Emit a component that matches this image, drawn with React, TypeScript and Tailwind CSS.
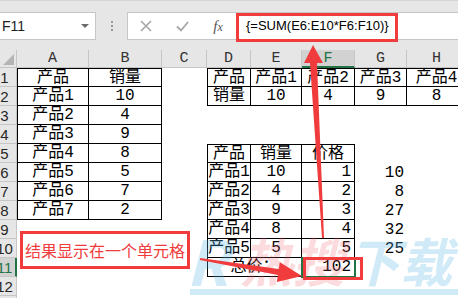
import clsx from 'clsx';

type Cell = {
  v?: string;
  r?: boolean; // right aligned (numbers)
  b?: boolean; // has black border
  span?: number;
  skip?: boolean; // covered by a merged cell
};

const cols = [
  { id: 'A', sel: false },
  { id: 'B', sel: false },
  { id: 'C', sel: false },
  { id: 'D', sel: false },
  { id: 'E', sel: false },
  { id: 'F', sel: true },
  { id: 'G', sel: false },
  { id: 'H', sel: false },
];

const t = (v: string): Cell => ({ v, b: true });
const n = (v: string): Cell => ({ v, r: true, b: true });
const g = (v: string): Cell => ({ v, r: true });
const e: Cell = {};

const rows: Cell[][] = [
  [t('产品'), t('销量'), e, t('产品'), t('产品1'), t('产品2'), t('产品3'), t('产品4')],
  [t('产品1'), t('10'), e, t('销量'), t('10'), t('4'), t('9'), t('8')],
  [t('产品2'), t('4'), e, e, e, e, e, e],
  [t('产品3'), t('9'), e, e, e, e, e, e],
  [t('产品4'), t('8'), e, t('产品'), t('销量'), t('价格'), e, e],
  [t('产品5'), t('5'), e, t('产品1'), t('10'), n('1'), g('10'), e],
  [t('产品6'), t('7'), e, t('产品2'), t('4'), n('2'), g('8'), e],
  [t('产品7'), t('2'), e, t('产品3'), t('9'), n('3'), g('27'), e],
  [e, e, e, t('产品4'), t('8'), n('4'), g('32'), e],
  [e, e, e, t('产品5'), t('5'), n('5'), g('25'), e],
  [e, e, e, { v: '总价：', b: true, span: 2 }, { b: true, skip: true }, n('102'), e, e],
  [e, e, e, e, e, e, e, e],
  [e, e, e, e, e, e, e, e],
];

const bd = (r: number, c: number) => r >= 0 && c >= 0 && !!rows[r]?.[c]?.b;

export default function App() {
  return (
    <div className="relative w-[458px] h-[298px] overflow-hidden bg-white font-['Liberation_Sans',sans-serif]">
      {/* Formula bar */}
      <div className="h-[50px] bg-[#e6e6e6] border-t border-[#d4d4d4] flex items-start pt-[11px]">
        <div className="ml-[-4px] w-[100px] h-[28px] bg-white border border-[#c6c6c6] flex items-center justify-between pl-[5px] pr-[6px]">
          <span className="text-[14px] text-[#222]">F11</span>
          <svg width="8" height="4" viewBox="0 0 8 4">
            <path d="M0 0h8L4 4z" fill="#6b6b6b" />
          </svg>
        </div>
        <div className="w-[31px] h-[28px] flex flex-col items-center justify-center gap-[2px]">
          <span className="w-[2px] h-[2px] bg-[#9a9a9a]" />
          <span className="w-[2px] h-[2px] bg-[#9a9a9a]" />
          <span className="w-[2px] h-[2px] bg-[#9a9a9a]" />
        </div>
        <div className="flex-1 mr-[-4px] h-[28px] bg-white border border-[#c6c6c6] flex items-center">
          <div className="w-[36px] flex justify-center">
            <svg width="12" height="12" viewBox="0 0 12 12">
              <path d="M1 1l10 10M11 1L1 11" stroke="#a6a6a6" strokeWidth="1.6" />
            </svg>
          </div>
          <div className="w-[36px] flex justify-center">
            <svg width="13" height="11" viewBox="0 0 13 11">
              <path d="M1 5.5l4 4L12 1" stroke="#a6a6a6" strokeWidth="1.8" fill="none" />
            </svg>
          </div>
          <div className="w-[36px] flex justify-center">
            <span className="font-['Liberation_Serif',serif] italic text-[15px] text-[#555] leading-none">
              f<span className="text-[12px]">x</span>
            </span>
          </div>
          <span className="ml-[10px] text-[13px] text-black">{'{=SUM(E6:E10*F6:F10)}'}</span>
        </div>
      </div>

      {/* Sheet grid */}
      <div className="grid grid-cols-[17px_72px_73px_45px_44px_51px_53px_52px_60px] font-['Liberation_Mono','Noto_Sans_CJK_SC',monospace] text-[16px] text-black">
        <div className="h-[18px] bg-[#e6e6e6] border-r border-b border-[#c6c6c6] flex items-end justify-end p-[2px]">
          <svg width="11" height="11" viewBox="0 0 11 11">
            <path d="M11 0v11H0z" fill="#b4b4b4" />
          </svg>
        </div>
        {cols.map((c) => (
          <div
            key={c.id}
            className={clsx(
              'h-[18px] flex items-center justify-center text-[15px] leading-none border-r border-[#c6c6c6]',
              c.sel ? 'bg-[#d2d2d2] text-[#217346] border-b-2 border-b-[#217346]' : 'bg-[#e6e6e6] text-[#333] border-b'
            )}
          >
            {c.id}
          </div>
        ))}

        {rows.map((row, r) => [
          <div
            key={`h${r}`}
            className={clsx(
              'h-[19px] overflow-hidden border-b border-[#c6c6c6] flex items-center',
              r === 10 ? 'bg-[#d2d2d2] text-[#217346] border-r-2 border-r-[#217346]' : 'bg-[#e6e6e6] text-[#262626] border-r'
            )}
          >
            <span className="ml-[-8px] w-[25px] shrink-0 text-center font-['Liberation_Sans',sans-serif] text-[15px] leading-none">
              {r + 1}
            </span>
          </div>,
          ...row.map((c, ci) =>
            c.skip ? null : (
              <div
                key={`${r}-${ci}`}
                className={clsx(
                  'relative h-[19px] flex items-center leading-none whitespace-nowrap',
                  c.span === 2 && 'col-span-2',
                  c.r ? 'justify-end pr-[3px]' : 'justify-center',
                  c.b && 'border-r border-b border-black',
                  c.b && !bd(r, ci - 1) && 'border-l',
                  c.b && !bd(r - 1, ci) && 'border-t'
                )}
              >
                {c.v}
              </div>
            )
          ),
        ])}
      </div>

      {/* Watermark */}
      <div className="absolute left-[186px] top-[234px] flex items-start italic font-bold font-['Noto_Sans_CJK_SC',sans-serif] text-[52px] leading-none pointer-events-none">
        <span className="text-[rgba(90,180,230,0.28)] text-[62px] mt-[-6px]">R</span>
        <span className="ml-[12px] text-[rgba(235,90,100,0.22)]">热搜</span>
        <span className="ml-[4px] text-[rgba(90,180,230,0.28)]">下载</span>
      </div>
      <div className="absolute left-[190px] top-[289px] w-[268px] h-[6px] bg-[rgba(90,180,230,0.28)] pointer-events-none" />

      {/* Selection of F11 */}
      <div className="absolute left-[301px] top-[257px] w-[55px] h-[21px] border-2 border-[#217346] pointer-events-none" />

      {/* Annotations */}
      <div className="absolute left-[236px] top-[13px] w-[162px] h-[29px] border-[3px] border-[#f03c3c]" />
      <div className="absolute left-[303px] top-[257px] w-[60px] h-[23px] border-[3px] border-[#f03c3c]" />
      <div className="absolute left-[20px] top-[231px] w-[170px] h-[38px] border-[3px] border-[#f03c3c] bg-white flex items-center justify-center">
        <span className="font-['Noto_Sans_CJK_SC',sans-serif] text-[16px] leading-none text-[#f03c3c]">
          结果显示在一个单元格
        </span>
      </div>
      <svg className="absolute inset-0 pointer-events-none" width="458" height="298" viewBox="0 0 458 298">
        <polygon points="313,45 323,63 317,63 324,238 322,238 310,63 304,63" fill="#f03c3c" />
        <polygon
          points="302,276 279.8,262.2 278.7,269.1 200.1,258 199.9,260 277.9,275.1 276.8,282"
          fill="#f03c3c"
        />
      </svg>
    </div>
  );
}
